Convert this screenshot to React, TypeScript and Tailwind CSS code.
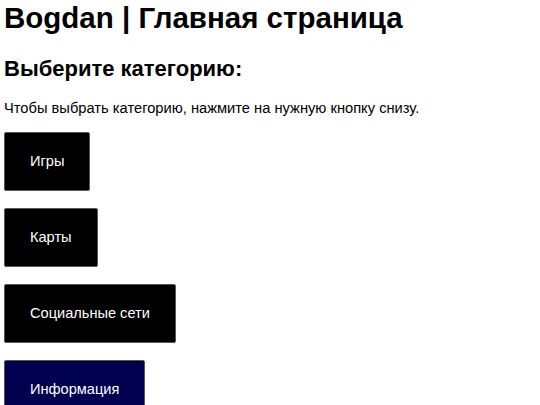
const CATEGORIES = [
  { label: 'Игры', bg: 'bg-black' },
  { label: 'Карты', bg: 'bg-black' },
  { label: 'Социальные сети', bg: 'bg-black' },
  { label: 'Информация', bg: 'bg-[#000050]' },
];

export default function App() {
  return (
    <div className="min-h-screen bg-white px-[4px] pt-[1px] text-black font-['Liberation_Sans',Arial,sans-serif]">
      <h1 className="text-[29.5px] font-bold leading-[34px]">Bogdan | Главная страница</h1>
      <h2 className="text-[22px] font-bold leading-[25px] mt-[21px]">Выберите категорию:</h2>
      <p className="text-[14.7px] leading-[17px] mt-[19px]">
        Чтобы выбрать категорию, нажмите на нужную кнопку снизу.
      </p>
      <div className="flex flex-col items-start gap-[17px] mt-[15px]">
        {CATEGORIES.map((c) => (
          <button
            key={c.label}
            className={`${c.bg} text-white text-[14.6px] leading-[17px] px-[25px] py-[20px] border border-[#555] rounded-[2px]`}
          >
            {c.label}
          </button>
        ))}
      </div>
    </div>
  );
}
